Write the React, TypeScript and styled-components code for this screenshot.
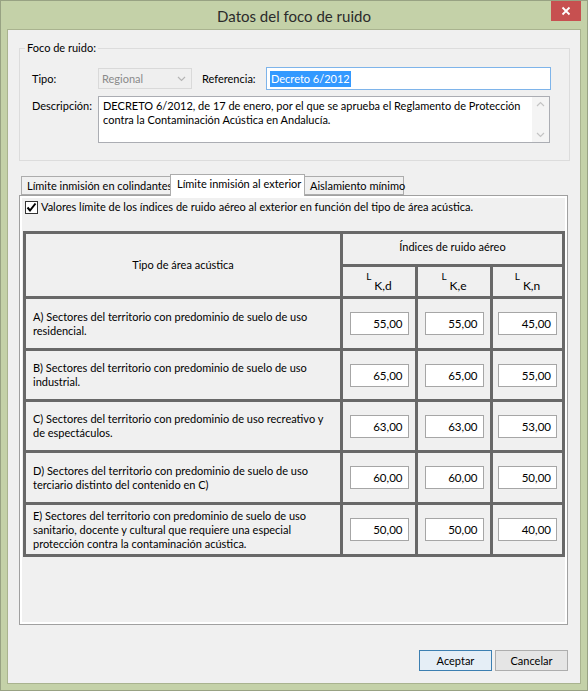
import React from "react"
import styled, { createGlobalStyle } from "styled-components"

const GlobalStyle = createGlobalStyle`
  html, body {
    margin: 0;
    padding: 0;
  }
  body {
    background: #c4d1a8;
    font-family: Lato, "Noto Sans", sans-serif;
    font-size: 11px;
    color: #000;
  }
  * {
    box-sizing: border-box;
  }
`

const Window = styled.div`
  width: 588px;
  height: 691px;
  background: #c4d1a8;
  border: 1px solid #98a283;
  display: flex;
  flex-direction: column;
`

const TitleBar = styled.div`
  height: 28px;
  display: grid;
  grid-template-columns: 1fr auto 1fr;
  align-items: start;
`

const Title = styled.div`
  grid-column: 2;
  font-size: 15px;
  line-height: 30px;
  color: #2b2b2b;
`

const CloseButton = styled.div`
  grid-column: 3;
  justify-self: end;
  width: 30px;
  height: 20px;
  margin-right: 6px;
  background: #c75050;
  display: flex;
  align-items: center;
  justify-content: center;
`

const Client = styled.div`
  flex: 1;
  margin: 0 6px 6px 6px;
  border: 1px solid #a9b38f;
  background: #f0f0f0;
  padding-left: 11px;
  display: flex;
  flex-direction: column;
`

const GroupBox = styled.fieldset`
  margin: 10px 0 0 0;
  width: 551px;
  border: 1px solid #dcdcdc;
  padding: 11px 12px 17px 12px;
  min-width: 0;
`

const Legend = styled.legend`
  margin-left: -7px;
  padding: 0 2px;
  line-height: 16px;
`

const FieldRow = styled.div<{ $top?: boolean; $gap?: number }>`
  display: flex;
  align-items: ${(p) => (p.$top ? "flex-start" : "center")};
  margin-top: ${(p) => p.$gap ?? 0}px;
`

const FieldLabel = styled.div<{ $w: number; $ml?: number; $pt?: number }>`
  width: ${(p) => p.$w}px;
  margin-left: ${(p) => p.$ml ?? 0}px;
  padding-top: ${(p) => p.$pt ?? 0}px;
  line-height: 14px;
  white-space: nowrap;
`

const Select = styled.div`
  width: 94px;
  height: 21px;
  border: 1px solid #d9d9d9;
  background: #efefef;
  color: #8a8a8a;
  display: flex;
  align-items: center;
  justify-content: space-between;
  padding: 0 5px 0 3px;
`

const TextInput = styled.div`
  width: 285px;
  height: 23px;
  border: 1px solid #7eb4ea;
  background: #fff;
  display: flex;
  align-items: center;
  padding-left: 3px;
`

const Selected = styled.span`
  background: #3399ff;
  color: #fff;
  line-height: 16px;
  padding: 0 1px;
`

const TextArea = styled.div`
  width: 452px;
  height: 47px;
  border: 1px solid #abadb3;
  background: #fff;
  display: flex;
`

const TextAreaBody = styled.div`
  flex: 1;
  padding: 2px 4px;
  line-height: 14px;
  white-space: nowrap;
  overflow: hidden;
`

const ScrollBar = styled.div`
  width: 17px;
  background: #f4f4f4;
  display: flex;
  flex-direction: column;
  justify-content: space-between;
  align-items: center;
  padding: 4px 0;
`

const TabStrip = styled.div`
  margin-top: 13px;
  height: 21px;
  display: flex;
  align-items: flex-end;
  padding-left: 2px;
`

const Tab = styled.div<{ $active?: boolean; $w: number }>`
  width: ${(p) => p.$w}px;
  height: ${(p) => (p.$active ? 22 : 19)}px;
  margin-left: -1px;
  margin-bottom: ${(p) => (p.$active ? -1 : 0)}px;
  border: 1px solid #acacac;
  border-bottom: ${(p) => (p.$active ? "none" : "1px solid #acacac")};
  background: ${(p) => (p.$active ? "#fff" : "#f0f0f0")};
  position: relative;
  z-index: ${(p) => (p.$active ? 1 : 0)};
  display: flex;
  align-items: ${(p) => (p.$active ? "flex-start" : "center")};
  padding-top: ${(p) => (p.$active ? 2 : 0)}px;
  padding-left: ${(p) => (p.$active ? 6 : 5)}px;
  white-space: nowrap;
  &:first-child {
    margin-left: 0;
  }
`

const TabPanel = styled.div`
  width: 549px;
  height: 430px;
  border: 1px solid #a0a0a0;
  box-shadow: inset 0 0 0 2px #fff;
  background: #f0f0f0;
  padding: 4px 0 0 3px;
`

const CheckRow = styled.div`
  display: flex;
  align-items: center;
  padding-left: 2px;
  height: 14px;
  line-height: 14px;
  white-space: nowrap;
`

const CheckBox = styled.span`
  width: 13px;
  height: 13px;
  border: 1px solid #333;
  background: #fff;
  display: flex;
  align-items: center;
  justify-content: center;
  margin-right: 3px;
`

const Grid = styled.div`
  margin-top: 17px;
  width: 542px;
  height: 326px;
  background: #686868;
  padding: 3px;
  display: grid;
  grid-template-columns: 314px 72px 72px 69px;
  grid-template-rows: 30px 29px 49px 48px 48px 49px 49px;
  gap: 3px;
`

const Cell = styled.div<{ $col?: string; $row?: string; $left?: boolean; $pb?: number }>`
  background: #f0f0f0;
  grid-column: ${(p) => p.$col ?? "auto"};
  grid-row: ${(p) => p.$row ?? "auto"};
  display: flex;
  align-items: center;
  justify-content: ${(p) => (p.$left ? "flex-start" : "center")};
  padding-left: ${(p) => (p.$left ? 7 : 0)}px;
  padding-bottom: ${(p) => p.$pb ?? 0}px;
  line-height: 14px;
  white-space: nowrap;
`

const IndexLabel = styled.span`
  display: inline-flex;
  align-items: flex-start;
  height: 22px;
`

const IndexL = styled.span`
  font-size: 10px;
  line-height: 10px;
  margin-right: 3px;
`

const IndexSub = styled.span`
  margin-top: 8px;
  font-size: 12px;
  line-height: 14px;
`

const ValueBox = styled.div`
  width: 59px;
  height: 23px;
  border: 1px solid #a6a6a6;
  background: #fff;
  text-align: right;
  padding-right: 5px;
  line-height: 21px;
  font-size: 11.5px;
`

const Footer = styled.div`
  width: 549px;
  margin-top: 25px;
  display: flex;
  justify-content: flex-end;
  gap: 3px;
`

const Button = styled.div<{ $default?: boolean }>`
  width: 73px;
  height: 21px;
  border: 1px solid ${(p) => (p.$default ? "#3c7fb1" : "#adadad")};
  background: ${(p) => (p.$default ? "#e5eef6" : "#e5e5e5")};
  display: flex;
  align-items: center;
  justify-content: center;
`

const Chevron = ({ dir, color }: { dir: "up" | "down"; color: string }) => (
  <svg width="9" height="6" viewBox="0 0 9 6">
    <path
      d={dir === "down" ? "M1 1 L4.5 4.5 L8 1" : "M1 5 L4.5 1.5 L8 5"}
      fill="none"
      stroke={color}
      strokeWidth="1.2"
    />
  </svg>
)

const rows = [
  {
    text: ["A) Sectores del territorio con predominio de suelo de uso", "residencial."],
    values: ["55,00", "55,00", "45,00"],
  },
  {
    text: ["B) Sectores del territorio con predominio de suelo de uso", "industrial."],
    values: ["65,00", "65,00", "55,00"],
  },
  {
    text: ["C) Sectores del territorio con predominio de uso recreativo y", "de espectáculos."],
    values: ["63,00", "63,00", "53,00"],
  },
  {
    text: ["D) Sectores del territorio con predominio de suelo de uso", "terciario distinto del contenido en C)"],
    values: ["60,00", "60,00", "50,00"],
  },
  {
    text: [
      "E) Sectores del territorio con predominio de suelo de uso",
      "sanitario, docente y cultural que requiere una especial",
      "protección contra la contaminación acústica.",
    ],
    values: ["50,00", "50,00", "40,00"],
  },
]

const indices = ["K,d", "K,e", "K,n"]

export default function App() {
  return (
    <>
      <GlobalStyle />
      <Window>
        <TitleBar>
          <Title>Datos del foco de ruido</Title>
          <CloseButton>
            <svg width="10" height="10" viewBox="0 0 10 10">
              <path d="M1.5 1.5 L8.5 8.5 M8.5 1.5 L1.5 8.5" stroke="#fff" strokeWidth="1.8" />
            </svg>
          </CloseButton>
        </TitleBar>
        <Client>
          <GroupBox>
            <Legend>Foco de ruido:</Legend>
            <FieldRow>
              <FieldLabel $w={66}>Tipo:</FieldLabel>
              <Select>
                <span>Regional</span>
                <Chevron dir="down" color="#b5b5b5" />
              </Select>
              <FieldLabel $w={64} $ml={10}>Referencia:</FieldLabel>
              <TextInput>
                <Selected>Decreto 6/2012</Selected>
              </TextInput>
            </FieldRow>
            <FieldRow $top $gap={6}>
              <FieldLabel $w={66} $pt={3}>Descripción:</FieldLabel>
              <TextArea>
                <TextAreaBody>
                  DECRETO 6/2012, de 17 de enero, por el que se aprueba el Reglamento de Protección
                  <br />
                  contra la Contaminación Acústica en Andalucía.
                </TextAreaBody>
                <ScrollBar>
                  <Chevron dir="up" color="#c4c4c4" />
                  <Chevron dir="down" color="#c4c4c4" />
                </ScrollBar>
              </TextArea>
            </FieldRow>
          </GroupBox>

          <TabStrip>
            <Tab $w={150}>Límite inmisión en colindantes</Tab>
            <Tab $w={135} $active>
              Límite inmisión al exterior
            </Tab>
            <Tab $w={100}>Aislamiento mínimo</Tab>
          </TabStrip>
          <TabPanel>
            <CheckRow>
              <CheckBox>
                <svg width="11" height="11" viewBox="0 0 11 11">
                  <path d="M1.5 5.5 L4 8.5 L9.5 1.5" fill="none" stroke="#000" strokeWidth="2" />
                </svg>
              </CheckBox>
              Valores límite de los índices de ruido aéreo al exterior en función del tipo de área acústica.
            </CheckRow>
            <Grid>
              <Cell $col="1" $row="1 / span 2">
                Tipo de área acústica
              </Cell>
              <Cell $col="2 / span 3" $row="1" $pb={5}>
                Índices de ruido aéreo
              </Cell>
              {indices.map((ix) => (
                <Cell key={ix}>
                  <IndexLabel>
                    <IndexL>L</IndexL>
                    <IndexSub>{ix}</IndexSub>
                  </IndexLabel>
                </Cell>
              ))}
              {rows.map((r, i) => (
                <React.Fragment key={i}>
                  <Cell $left>
                    <div>
                      {r.text.map((t, j) => (
                        <div key={j}>{t}</div>
                      ))}
                    </div>
                  </Cell>
                  {r.values.map((v, j) => (
                    <Cell key={j}>
                      <ValueBox>{v}</ValueBox>
                    </Cell>
                  ))}
                </React.Fragment>
              ))}
            </Grid>
          </TabPanel>
          <Footer>
            <Button $default>Aceptar</Button>
            <Button>Cancelar</Button>
          </Footer>
        </Client>
      </Window>
    </>
  )
}
